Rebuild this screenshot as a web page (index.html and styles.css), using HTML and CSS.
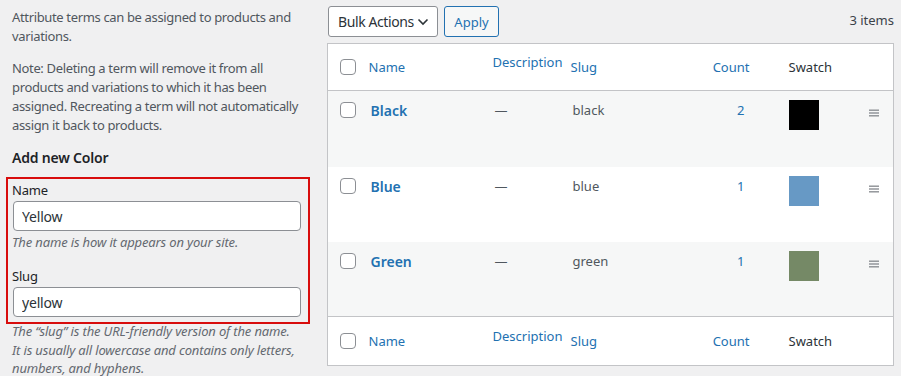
FILE: index.html
```html
<!DOCTYPE html>
<html lang="en">
<head>
    <meta charset="UTF-8">
    <meta name="viewport" content="width=device-width, initial-scale=1.0">
    <title>Product attributes - Color</title>
    <link rel="stylesheet" href="styles.css">
</head>
<body>
    <div class="page">
        <div class="col-left">
            <p class="intro">Attribute terms can be assigned to products and variations.</p>
            <p class="intro">Note: Deleting a term will remove it from all products and variations to which it has been assigned. Recreating a term will not automatically assign it back to products.</p>
            <h2>Add new Color</h2>
            <div class="highlight">
                <label for="tagName">Name</label>
                <input type="text" id="tagName" value="Yellow">
                <p class="help">The name is how it appears on your site.</p>
                <label for="tagSlug" class="second">Slug</label>
                <input type="text" id="tagSlug" value="yellow">
            </div>
            <p class="help after">The “slug” is the URL-friendly version of the name. It is usually all lowercase and contains only letters, numbers, and hyphens.</p>
        </div>

        <div class="col-right">
            <div class="tablenav">
                <div class="select">
                    <span>Bulk Actions</span>
                    <svg width="12" height="8" viewBox="0 0 12 8"><path d="M1.5 1.5 L6 6 L10.5 1.5" fill="none" stroke="#2c3338" stroke-width="1.6"/></svg>
                </div>
                <button class="apply">Apply</button>
                <span class="count-items">3 items</span>
            </div>

            <table class="terms">
                <colgroup>
                    <col class="c-check"><col class="c-name"><col class="c-desc"><col class="c-slug"><col class="c-count"><col class="c-swatch"><col class="c-handle">
                </colgroup>
                <thead>
                    <tr>
                        <th><span class="cb"></span></th>
                        <th><a href="#">Name</a></th>
                        <th class="raised"><a href="#">Description</a></th>
                        <th><a href="#">Slug</a></th>
                        <th class="num"><a href="#">Count</a></th>
                        <th class="plain">Swatch</th>
                        <th></th>
                    </tr>
                </thead>
                <tbody>
                    <tr class="alt">
                        <td><span class="cb"></span></td>
                        <td><a href="#" class="row-title">Black</a></td>
                        <td>—</td>
                        <td>black</td>
                        <td class="num"><a href="#">2</a></td>
                        <td><span class="swatch" style="background:#000000"></span></td>
                        <td class="handle"><svg width="10" height="8" viewBox="0 0 10 8"><rect y="0.5" width="10" height="1.4"/><rect y="3.3" width="10" height="1.4"/><rect y="6.1" width="10" height="1.4"/></svg></td>
                    </tr>
                    <tr>
                        <td><span class="cb"></span></td>
                        <td><a href="#" class="row-title">Blue</a></td>
                        <td>—</td>
                        <td>blue</td>
                        <td class="num"><a href="#">1</a></td>
                        <td><span class="swatch" style="background:#6799c5"></span></td>
                        <td class="handle"><svg width="10" height="8" viewBox="0 0 10 8"><rect y="0.5" width="10" height="1.4"/><rect y="3.3" width="10" height="1.4"/><rect y="6.1" width="10" height="1.4"/></svg></td>
                    </tr>
                    <tr class="alt">
                        <td><span class="cb"></span></td>
                        <td><a href="#" class="row-title">Green</a></td>
                        <td>—</td>
                        <td>green</td>
                        <td class="num"><a href="#">1</a></td>
                        <td><span class="swatch" style="background:#758966"></span></td>
                        <td class="handle"><svg width="10" height="8" viewBox="0 0 10 8"><rect y="0.5" width="10" height="1.4"/><rect y="3.3" width="10" height="1.4"/><rect y="6.1" width="10" height="1.4"/></svg></td>
                    </tr>
                </tbody>
                <tfoot>
                    <tr>
                        <th><span class="cb"></span></th>
                        <th><a href="#">Name</a></th>
                        <th class="raised"><a href="#">Description</a></th>
                        <th><a href="#">Slug</a></th>
                        <th class="num"><a href="#">Count</a></th>
                        <th class="plain">Swatch</th>
                        <th></th>
                    </tr>
                </tfoot>
            </table>
        </div>
    </div>
</body>
</html>
```

FILE: styles.css
```css
body { margin: 0; background: #f0f0f1; font-family: "Noto Sans", "Open Sans", sans-serif; font-size: 13px; color: #3c434a; }
a { color: #2271b1; text-decoration: none; }

.page { display: flex; align-items: flex-start; }
.col-left { width: 298px; padding: 8px 0 0 12px; flex: none; }
.col-right { flex: 1; margin-left: 17px; margin-right: 7px; padding-top: 6px; }

.intro { margin: 0 0 13px; line-height: 19px; color: #50575e; letter-spacing: -0.35px; }
h2 { margin: 0 0 9px; font-size: 14px; font-weight: 600; line-height: 20px; color: #1d2327; letter-spacing: -0.2px; }

.highlight { margin-left: -6px; padding: 2px 7px 5px 4px; border: 2px solid #d80d0d; }
.highlight label { display: block; line-height: 19px; color: #1d2327; letter-spacing: -0.2px; }
.highlight label.second { margin-top: 15px; }
.highlight input { display: block; box-sizing: border-box; width: 288px; height: 30px; margin: 1px 0 0 1px; padding: 0 8px; border: 1px solid #8c8f94; border-radius: 4px; background: #fff; font-family: inherit; font-size: 14px; color: #2c3338; letter-spacing: -0.2px; }
.help { margin: 2px 0 0; font-style: italic; line-height: 19px; color: #646970; letter-spacing: -0.15px; }
.help.after { width: 288px; margin-top: -2px; line-height: 18.5px; }

.tablenav { display: flex; align-items: center; height: 31px; margin-bottom: 6px; }
.select { box-sizing: border-box; display: flex; align-items: center; justify-content: space-between; width: 110px; height: 31px; padding: 0 8px 0 9px; margin-left: 1px; border: 1px solid #8c8f94; border-radius: 3px; background: #fff; font-size: 14px; color: #2c3338; white-space: nowrap; letter-spacing: -0.4px; }
.apply { box-sizing: border-box; width: 55px; height: 31px; margin-left: 6px; padding: 0; border: 1px solid #2271b1; border-radius: 3px; background: #f6f7f7; color: #2271b1; font-family: inherit; font-size: 13px; }
.count-items { margin-left: auto; margin-top: -3px; color: #3c434a; }

.terms { width: 100%; border-collapse: collapse; table-layout: fixed; background: #fff; border: 1px solid #c3c4c7; }
.c-check { width: 33px; }
.c-name { width: 124px; }
.c-desc { width: 78px; }
.c-slug { width: 130px; }
.c-count { width: 88px; }
.c-swatch { width: 76px; }

.terms thead tr { height: 47px; }
.terms tfoot tr { height: 49px; }
.terms th { padding: 0 0 0 8px; text-align: left; font-weight: 400; font-size: 13px; line-height: 19px; vertical-align: middle; }
.terms thead th { border-bottom: 1px solid #c3c4c7; }
.terms tfoot th { border-top: 1px solid #c3c4c7; }
.terms th:first-child { padding-left: 12px; }
.terms th.raised { vertical-align: top; padding-top: 9px; }
.terms tfoot th.raised { padding-top: 10px; }
.terms th.num { text-align: right; padding-right: 31px; }
.terms th.plain { color: #2c3338; }

.terms tbody tr { height: 75px; }
.terms tbody tr:first-child { height: 76px; }
.terms td { padding: 10px 0 0 10px; vertical-align: top; line-height: 19px; color: #50575e; }
.terms td:first-child { padding-left: 12px; padding-top: 11px; }
.terms td.num { text-align: right; padding-right: 36px; padding-left: 0; }
.terms td.num a { color: #2271b1; }
.terms td.handle { text-align: center; padding: 12px 1px 0 0; fill: #8c8f94; }
.terms tr.alt td { background: #f6f7f7; }

.row-title { font-weight: 600; font-size: 14px; }
.swatch { display: block; width: 30px; height: 30px; margin: -1px 0 0 -2px; }
.cb { display: block; box-sizing: border-box; width: 16px; height: 16px; border: 1px solid #8c8f94; border-radius: 4px; background: #fff; }
```
